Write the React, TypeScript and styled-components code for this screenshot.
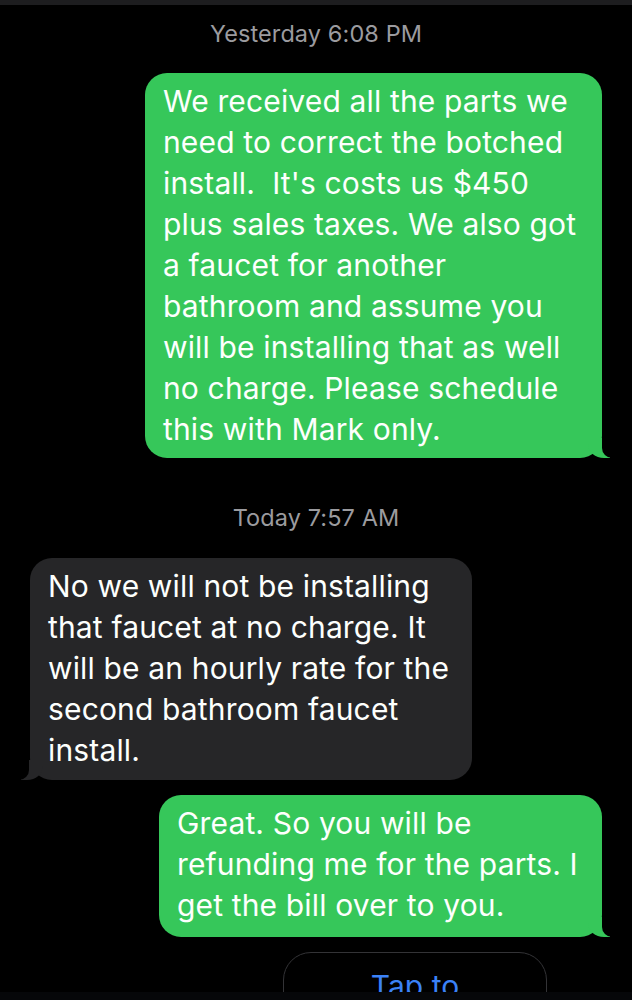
import React from "react";
import styled, { createGlobalStyle } from "styled-components";

const Global = createGlobalStyle`
  html, body { margin: 0; padding: 0; background: #000; }
  body { font-family: Inter, "Liberation Sans", Arial, sans-serif; -webkit-font-smoothing: antialiased; }
`;

const Screen = styled.div`
  width: 632px;
  height: 1000px;
  background: #000;
  display: flex;
  flex-direction: column;
  overflow: hidden;
`;

const TopBar = styled.div`
  height: 5px;
  flex: none;
  background: #1d1d1f;
`;

const Thread = styled.div`
  flex: 1;
  min-height: 0;
  overflow: hidden;
  display: flex;
  flex-direction: column;
`;

const Stamp = styled.div<{ $top: number; $bottom: number }>`
  flex: none;
  padding: ${(p) => p.$top}px 0 ${(p) => p.$bottom}px;
  text-align: center;
  color: #9b9b9f;
  font-size: 23.5px;
  line-height: 28px;
  letter-spacing: 0.1px;
`;

const Row = styled.div<{ $side: "left" | "right"; $gap: number }>`
  display: flex;
  flex: none;
  justify-content: ${(p) => (p.$side === "right" ? "flex-end" : "flex-start")};
  padding: 0 30px;
  margin-bottom: ${(p) => p.$gap}px;
`;

const Bubble = styled.div<{ $kind: "sent" | "received"; $w: number; $pb: number }>`
  position: relative;
  width: ${(p) => p.$w}px;
  box-sizing: border-box;
  padding: 8px 12px ${(p) => p.$pb}px 18px;
  border-radius: 22px;
  background: ${(p) => (p.$kind === "sent" ? "#36c75a" : "#262628")};
  color: #fdfffd;
  font-size: 30px;
  line-height: 41px;
  letter-spacing: 0.15px;

  &::before {
    content: "";
    position: absolute;
    bottom: 0;
    ${(p) => (p.$kind === "sent" ? "right: -8px;" : "left: -9px;")}
    width: 22px;
    height: 20px;
    background: ${(p) => (p.$kind === "sent" ? "#36c75a" : "#262628")};
    ${(p) =>
      p.$kind === "sent"
        ? "border-bottom-left-radius: 16px 14px;"
        : "border-bottom-right-radius: 16px 14px;"}
  }
  &::after {
    content: "";
    position: absolute;
    bottom: 0;
    ${(p) => (p.$kind === "sent" ? "right: -12px;" : "left: -13px;")}
    width: 12px;
    height: 22px;
    background: #000;
    ${(p) =>
      p.$kind === "sent"
        ? "border-bottom-left-radius: 10px;"
        : "border-bottom-right-radius: 10px;"}
  }
`;

const Line = styled.span`
  display: block;
  white-space: pre;
`;

const TapRow = styled.div`
  display: flex;
  flex: none;
  padding-left: 283px;
`;

const TapBox = styled.div`
  width: 264px;
  height: 70px;
  box-sizing: border-box;
  border: 1.5px solid #333336;
  border-radius: 28px;
  display: flex;
  justify-content: center;
  padding-top: 15px;
  color: #3b82f7;
  font-size: 30px;
  line-height: 36px;
`;

const BottomStrip = styled.div`
  height: 8px;
  flex: none;
  background: #060709;
`;

const Message = ({
  kind,
  w,
  pb,
  lines,
}: {
  kind: "sent" | "received";
  w: number;
  pb: number;
  lines: string[];
}) => (
  <Bubble $kind={kind} $w={w} $pb={pb}>
    {lines.map((l, i) => (
      <Line key={i}>{l}</Line>
    ))}
  </Bubble>
);

export default function App() {
  return (
    <>
      <Global />
      <Screen>
        <TopBar />
        <Thread>
          <Stamp $top={15} $bottom={25}>Yesterday 6:08 PM</Stamp>
          <Row $side="right" $gap={0}>
            <Message
              kind="sent"
              w={457}
              pb={8}
              lines={[
                "We received all the parts we",
                "need to correct the botched",
                "install.  It's costs us $450",
                "plus sales taxes. We also got",
                "a faucet for another",
                "bathroom and assume you",
                "will be installing that as well",
                "no charge. Please schedule",
                "this with Mark only.",
              ]}
            />
          </Row>
          <Stamp $top={46} $bottom={26}>Today 7:57 AM</Stamp>
          <Row $side="left" $gap={15}>
            <Message
              kind="received"
              w={442}
              pb={9}
              lines={[
                "No we will not be installing",
                "that faucet at no charge. It",
                "will be an hourly rate for the",
                "second bathroom faucet",
                "install.",
              ]}
            />
          </Row>
          <Row $side="right" $gap={15}>
            <Message
              kind="sent"
              w={443}
              pb={11}
              lines={[
                "Great. So you will be",
                "refunding me for the parts. I",
                "get the bill over to you.",
              ]}
            />
          </Row>
          <TapRow>
            <TapBox>Tap to</TapBox>
          </TapRow>
        </Thread>
        <BottomStrip />
      </Screen>
    </>
  );
}
